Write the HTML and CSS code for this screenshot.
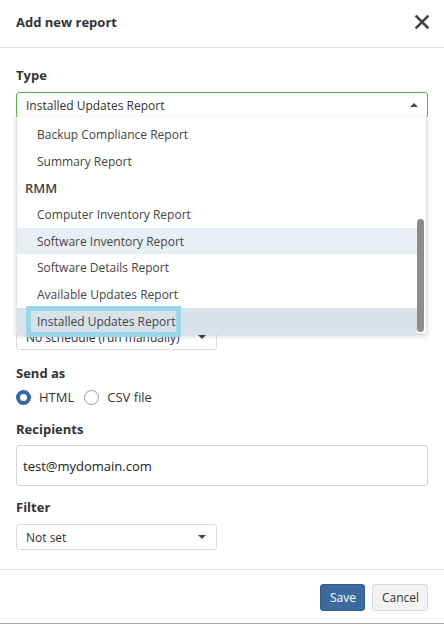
FILE: index.html
```html
<!DOCTYPE html>
<html>
<head>
<meta charset="utf-8">
<link rel="stylesheet" href="styles.css">
</head>
<body>
<div class="dialog">
  <div class="header">
    <h1 class="title">Add new report</h1>
    <button class="close" aria-label="Close">
      <svg width="14" height="14" viewBox="0 0 14 14"><path d="M1.5 1.5 L12.5 12.5 M12.5 1.5 L1.5 12.5" stroke="#444" stroke-width="2.6" stroke-linecap="square"/></svg>
    </button>
  </div>
  <div class="body">
    <div class="field">
      <div class="label">Type</div>
      <div class="type-wrap">
        <div class="select select-open">
          <span>Installed Updates Report</span>
          <span class="caret caret-up"></span>
        </div>
        <div class="menu">
          <ul class="menu-list">
            <li class="opt">Backup Compliance Report</li>
            <li class="opt">Summary Report</li>
            <li class="group">RMM</li>
            <li class="opt">Computer Inventory Report</li>
            <li class="opt hover">Software Inventory Report</li>
            <li class="opt">Software Details Report</li>
            <li class="opt">Available Updates Report</li>
            <li class="opt selected"><span class="focus">Installed Updates Report</span></li>
          </ul>
          <div class="scrollbar"></div>
        </div>
      </div>
    </div>
    <div class="field schedule">
      <div class="select small"><span>No schedule (run manually)</span><span class="caret"></span></div>
    </div>
    <div class="field sendas">
      <div class="label">Send as</div>
      <div class="radios">
        <label class="radio"><span class="dot checked"></span>HTML</label>
        <label class="radio"><span class="dot"></span>CSV file</label>
      </div>
    </div>
    <div class="field recipients">
      <div class="label">Recipients</div>
      <div class="input">test@mydomain.com</div>
    </div>
    <div class="field filter">
      <div class="label">Filter</div>
      <div class="select small"><span>Not set</span><span class="caret"></span></div>
    </div>
  </div>
  <div class="footer">
    <button class="btn btn-primary">Save</button>
    <button class="btn btn-default">Cancel</button>
  </div>
</div>
</body>
</html>
```
FILE: styles.css
```css
* { box-sizing: border-box; }
html, body { margin: 0; padding: 0; background: #fff; }
body {
  font-family: "Open Sans", "Liberation Sans", sans-serif;
  color: #333;
  width: 444px;
  height: 625px;
  overflow: hidden;
}
.dialog {
  width: 444px;
  height: 624px;
  border-bottom: 1px solid #a8a8a8;
  display: flex;
  flex-direction: column;
}
.header {
  height: 48px;
  border-bottom: 1px solid #e3e3e3;
  display: flex;
  align-items: center;
  justify-content: space-between;
  padding: 0 15px 4px 16px;
}
.title {
  margin: 0;
  font-size: 13px;
  font-weight: 700;
  color: #333;
}
.close {
  border: 0;
  background: none;
  padding: 0;
  width: 14px;
  height: 14px;
  display: flex;
}
.body {
  flex: 1;
  padding: 18px 16px 0 16px;
  display: flex;
  flex-direction: column;
}
.field { display: flex; flex-direction: column; }
.label {
  font-size: 13px;
  font-weight: 700;
  line-height: 18px;
  margin-bottom: 8px;
  color: #333;
}
.schedule { margin-top: 206px; }
.sendas { margin-top: 14px; }
.sendas .label { margin-bottom: 5px; }
.recipients { margin-top: 13px; }
.recipients .label { margin-bottom: 7px; }
.filter { margin-top: 12px; }
.type-wrap { position: relative; }
.select {
  height: 26px;
  border: 1px solid #dcdcdc;
  border-radius: 3px;
  display: flex;
  align-items: center;
  justify-content: space-between;
  padding: 0 9px 0 9px;
  font-size: 12px;
  color: #333;
}
.select-open { border-color: #4fb84f; }
.select.small { width: 201px; }
.caret {
  width: 0; height: 0;
  border-left: 4px solid transparent;
  border-right: 4px solid transparent;
  border-top: 4px solid #444;
  margin-right: 1px;
}
.caret-up {
  border-top: 0;
  border-bottom: 4px solid #444;
  margin-right: 0;
}
.menu {
  position: absolute;
  left: 0;
  top: 25px;
  width: 411px;
  height: 217px;
  background: #fff;
  border: 1px solid #e4e4e4;
  border-top: 0;
  box-shadow: 0 2px 5px rgba(0,0,0,0.18);
  z-index: 5;
}
.menu-list {
  list-style: none;
  margin: 0;
  padding: 4px 0 0 0;
  width: 400px;
}
.opt, .group {
  height: 26.7px;
  display: flex;
  align-items: center;
  font-size: 12px;
  color: #444;
}
.opt { padding-left: 20px; }
.group { padding-left: 8px; font-size: 13px; font-weight: 600; color: #444; }
.opt.hover { background: #e9eef5; }
.opt.selected { background: #d9e2eb; }
.focus {
  outline: 5px solid #98d6e8;
  outline-offset: 0;
  padding: 2px 1px 2px 6px;
  margin-left: -6px;
}
.scrollbar {
  position: absolute;
  right: 2px;
  top: 102px;
  width: 7px;
  height: 113px;
  border-radius: 4px;
  background: #8d8d8d;
}
.input {
  height: 41px;
  border: 1px solid #d4d4d4;
  border-radius: 3px;
  display: flex;
  align-items: center;
  padding: 0 6px;
  font-size: 13px;
  color: #222;
}
.radios {
  display: flex;
  align-items: center;
  gap: 10px;
  height: 20px;
}
.radio {
  display: flex;
  align-items: center;
  gap: 8px;
  font-size: 13px;
  color: #333;
}
.dot {
  width: 15px; height: 15px;
  border-radius: 50%;
  border: 1px solid #9a9a9a;
  background: #fff;
}
.dot.checked { border: 4px solid #336aa5; }
.footer {
  height: 54px;
  border-top: 1px solid #e3e3e3;
  display: flex;
  align-items: center;
  justify-content: flex-end;
  gap: 7px;
  padding: 1px 16px 0 0;
}
.btn {
  font-family: "Open Sans", "Liberation Sans", sans-serif;
  font-size: 12px;
  height: 27px;
  border-radius: 3px;
  padding: 0 9px;
}
.btn-primary {
  background: #3b6a9e;
  border: 1px solid #325d8c;
  color: #fff;
  width: 45px;
}
.btn-default {
  background: #f3f3f3;
  border: 1px solid #dcdcdc;
  color: #333;
  width: 56px;
}
```
